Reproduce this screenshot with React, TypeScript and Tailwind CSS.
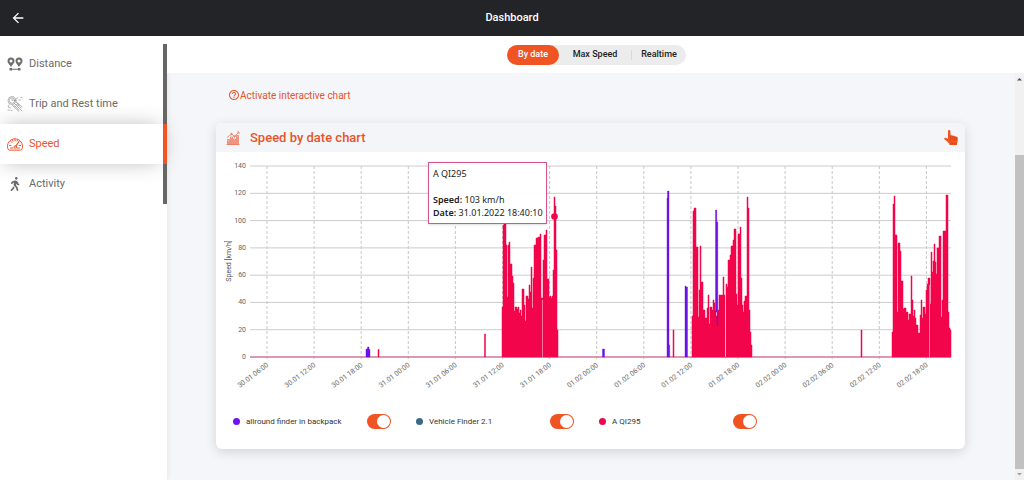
import React, { useState } from "react";
import { MdArrowBack, MdHelpOutline } from "react-icons/md";
import { FaWalking } from "react-icons/fa";

type IconProps = { className?: string };

function DistanceIcon({ className }: IconProps) {
  return (
    <svg viewBox="0 0 32 28" className={className} fill="currentColor" aria-hidden="true">
      <path
        fillRule="evenodd"
        d="M8 1a7 7 0 0 1 7 7c0 4-4 7-7 12C5 15 1 12 1 8a7 7 0 0 1 7-7Zm0 4a3 3 0 1 0 0 6 3 3 0 0 0 0-6ZM24 1a7 7 0 0 1 7 7c0 4-4 7-7 12-3-5-7-8-7-12a7 7 0 0 1 7-7Zm0 4a3 3 0 1 0 0 6 3 3 0 0 0 0-6Z"
      />
      <path d="M5 22h5v1.500h12V22h5v5h-5v-1.500H10V27H5z" />
    </svg>
  );
}

function TripIcon({ className }: IconProps) {
  return (
    <svg viewBox="0 0 32 32" className={className} fill="none" stroke="currentColor" strokeWidth="1" strokeLinecap="round" strokeLinejoin="round" aria-hidden="true">
      <circle cx="10" cy="9" r="8" />
      <circle cx="10" cy="9" r="5.500" />
      <path d="M10 6v3l3-1M18 6l4-3M18 12l6 6M15 15l15 15M11 19l13 12M20 13l10 9M4 18l-2 4 5 2M2 28h3M8 29h2M24 8h3M28 3h2M14 20c4 1 7 4 9 8M19 17c4 1 7 4 9 7" />
    </svg>
  );
}

function GaugeIcon({ className }: IconProps) {
  return (
    <svg viewBox="0 0 32 28" className={className} fill="none" stroke="currentColor" strokeWidth="2" strokeLinecap="round" strokeLinejoin="round" aria-hidden="true">
      <path d="M4 26a3 3 0 0 1-2-2 15 15 0 1 1 28 0 3 3 0 0 1-2 2Z" />
      <path d="M16 5v3M8 9l2 2M5 17h3M24 17h3M11 6l1 2M21 6l-1 2M7 22h5M20 22h5" />
      <path d="M24 9l-6 9" strokeWidth="2.500" />
      <circle cx="16.500" cy="20" r="2.500" />
    </svg>
  );
}

function WalkIcon({ className }: IconProps) {
  return <FaWalking className={className} />;
}

function BarsIcon({ className }: IconProps) {
  return (
    <svg viewBox="0 0 28 28" className={className} fill="none" stroke="currentColor" strokeWidth="1.200" strokeLinejoin="round" aria-hidden="true">
      <path d="M1 27h26M3 27V17h4v10M9 27V12h4v15M15 27V16h4v11M21 27V9h4v18M5 19v8M11 14v13M17 18v9M23 11v16" />
      <path d="M2 13l9-7 6 5 8-8M22 2h4v4" />
      <circle cx="11" cy="6" r="1.500" />
      <circle cx="17" cy="11" r="1.500" />
    </svg>
  );
}

function HandIcon({ className }: IconProps) {
  return (
    <svg viewBox="0 0 28 30" className={className} aria-hidden="true">
      <path
        fill="#f05423"
        d="M8 2.500C8 1 9 0 10.300 0S12.500 1 12.700 2.500L13.500 11c1-1 3.200-.8 4 .7 1.200-.9 3-.5 3.700.8 1.300-.6 3 0 3.500 1.200 1.400-.2 2.800.7 2.800 2.300v5c0 2-1 4-1.500 5.500V30H11v-2.500C8 25 5 21 1.500 19.500-.5 18 1 15 3.500 15.500L8 18Z"
      />
      <path d="M13.500 12v7M17.700 13v6M21.500 14v5M24.800 15v4" stroke="#b93a14" strokeWidth="0.900" strokeLinecap="round" />
      <path d="M11 27.500h15" stroke="#b93a14" strokeWidth="0.900" />
    </svg>
  );
}

const menu = [
  { label: "Distance", Icon: DistanceIcon },
  { label: "Trip and Rest time", Icon: TripIcon },
  { label: "Speed", Icon: GaugeIcon },
  { label: "Activity", Icon: WalkIcon },
];

function SideMenu() {
  return (
    <nav className="w-[167px] shrink-0 bg-white pt-2 shadow-[0_0_6px_rgba(0,0,0,0.08)]">
      <ul>
        {menu.map(({ label, Icon }) => {
          const active = label === "Speed";
          return (
            <li key={label} className={active ? "relative flex h-10" : "flex h-10"}>
              <a
                href="#"
                aria-current={active ? "page" : undefined}
                className={
                  active
                    ? "flex flex-1 items-center gap-1.5 bg-white pl-[7px] text-[#e8542a] shadow-[0_0_22px_-4px_rgba(0,0,0,0.35)]"
                    : "flex flex-1 items-center gap-1.5 pl-[7px] text-[#6c6c6c]"
                }
              >
                <Icon className={label === "Activity" ? "h-3.5 w-4" : "h-4 w-4 shrink-0"} />
                <span className="pt-px text-[11px]">{label}</span>
              </a>
              <span className={active ? "relative w-1 bg-[#f05423]" : "relative z-10 w-1 bg-[#666666]"} />
            </li>
          );
        })}
      </ul>
    </nav>
  );
}

function Tabs() {
  return (
    <div className="flex h-[37px] items-center justify-center bg-white pt-px pr-2.5 pl-3">
      <div role="tablist" className="flex h-5 items-center rounded-full bg-[#ececec] text-[9px] font-medium text-[#222222]">
        <button role="tab" aria-selected="true" className="h-5 w-[52px] rounded-full bg-[#f05423] text-white">By date</button>
        <button role="tab" aria-selected="false" className="h-5 w-[72px]">Max Speed</button>
        <span className="h-2.5 w-px bg-[#d8d8d8]" />
        <button role="tab" aria-selected="false" className="h-5 w-[54px]">Realtime</button>
      </div>
    </div>
  );
}

type Step = [number, number];
const BASE = 357;

// Each step is [x, top]; it holds until the next step's x.
const clusters: Step[][] = [
  [[502, 307], [503, 225], [504, 223], [506, 245], [507, 297], [508, 245], [509, 242], [510, 264], [512, 276], [513, 283], [514, 311], [515, 307], [517, 309], [518, 307], [519, 313], [520, 310], [521, 316], [522, 289], [524, 305], [525, 321], [526, 296], [528, 299], [529, 285], [530, 292], [531, 267], [532, 308], [533, 278], [534, 245], [536, 238], [538, 237], [540, 234], [541, 298], [543, 260], [544, 235], [546, 230], [547, 279], [549, 297], [550, 296], [551, 298], [552, 296], [553, 270], [554, 197], [555, 206], [556, 250], [557, 357]],
  [[692, 316], [693, 211], [694, 208], [696, 247], [698, 317], [699, 290], [700, 246], [701, 282], [703, 310], [705, 318], [707, 308], [708, 295], [709, 324], [710, 307], [712, 310], [713, 300], [714, 303], [715, 311], [716, 316], [718, 310], [719, 295], [723, 277], [724, 295], [725, 357], [726, 284], [727, 287], [728, 260], [730, 255], [731, 246], [733, 240], [734, 229], [736, 294], [737, 305], [738, 234], [740, 227], [741, 278], [742, 305], [743, 312], [744, 301], [745, 296], [747, 197], [748, 208], [749, 310], [750, 332], [751, 345], [752, 357]],
  [[892, 332], [893, 204], [894, 196], [895, 235], [897, 312], [898, 243], [900, 251], [901, 281], [903, 309], [904, 308], [906, 312], [908, 320], [909, 314], [911, 276], [912, 300], [913, 316], [914, 310], [915, 318], [916, 325], [918, 333], [920, 315], [921, 300], [922, 318], [923, 307], [925, 314], [926, 290], [927, 284], [928, 278], [930, 304], [931, 252], [932, 272], [933, 261], [934, 244], [935, 262], [936, 274], [937, 248], [939, 236], [941, 317], [942, 300], [943, 231], [946, 195], [948, 312], [949, 328], [950, 330], [951, 357]],
];

function stepPath(steps: Step[]) {
  let d = `M${steps[0][0]} ${BASE}`;
  steps.forEach(([x, y]) => {
    d += `H${x}V${y}`;
  });
  return `${d}V${BASE}Z`;
}

const ticks = ["30.01 06:00", "30.01 12:00", "30.01 18:00", "31.01 00:00", "31.01 06:00", "31.01 12:00", "31.01 18:00", "01.02 00:00", "01.02 06:00", "01.02 12:00", "01.02 18:00", "02.02 00:00", "02.02 06:00", "02.02 12:00", "02.02 18:00"];
const levels = [0, 20, 40, 60, 80, 100, 120, 140];

function SpeedChart() {
  return (
    <div className="relative">
      <svg viewBox="216 152 749 248" className="block h-auto w-full" role="img" aria-label="Speed by date">
        {levels.map((v) => {
          const y = BASE - v * 1.364;
          return (
            <g key={v}>
              <line x1="250" x2="951" y1={y} y2={y} stroke="#cccccc" strokeWidth="1" />
              <text x="246" y={y + 2} textAnchor="end" className="fill-[#666666] font-[Roboto] text-[7px]">{v}</text>
            </g>
          );
        })}
        {ticks.map((t, i) => {
          const x = 267 + i * 47.1;
          return (
            <g key={t}>
              <line x1={x} x2={x} y1="166" y2="360" stroke="#c8c8c8" strokeWidth="1" strokeDasharray="3 2" />
              <text x={x + 2} y="366" textAnchor="end" transform={`rotate(-37 ${x + 2} 366)`} className="fill-[#666666] font-[Roboto] text-[7px]">
                {t}
              </text>
            </g>
          );
        })}
        <text x="231" y="261" textAnchor="middle" transform="rotate(-90 231 261)" className="fill-[#555555] font-[Roboto] text-[7px]">Speed [km/h]</text>
        <line x1="250" x2="951" y1={BASE} y2={BASE} stroke="#d84a80" strokeWidth="1" />
        <g fill="#f2054b" stroke="#f2054b" strokeWidth="0.500" strokeLinejoin="round">
          {clusters.map((c, i) => (
            <path key={i} d={stepPath(c)} />
          ))}
          <path d="M378 357V350L379 349V357ZM484.500 357V334H485.500V357ZM557 357V330H558V357ZM673 357V330H674V357ZM861 357V330H862V357Z" />
        </g>
        <path d="M542.500 357V300M725.500 357V290M929.500 357V285" stroke="#ffc2d4" strokeWidth="0.600" />
        <g fill="#6a12e8" stroke="#6a12e8" strokeWidth="0.400">
          <path d="M366 357V349H367.500V347H369V349.500H370V357ZM602.500 357V349H604.500V357ZM667 357V198H667.500V191H669V345H669.700V357ZM685 357V286H686V287H687.500V357ZM715.500 312V210H716.800V222H717.800V326H717V312Z" />
        </g>
        <circle cx="554.500" cy="216.500" r="3.300" fill="#f2054b" />
      </svg>
      <div className="absolute top-[4%] left-[28.3%] border border-[#d9548a] bg-white/95 py-1 pr-[3px] pl-1 font-['Noto_Sans','Open_Sans',sans-serif] text-[9px] leading-[13px] whitespace-nowrap text-[#222222] shadow-sm">
        <p>A QI295</p>
        <p className="mt-[13px]"><b className="font-semibold">Speed:</b> 103 km/h</p>
        <p><b className="font-semibold">Date:</b> 31.01.2022 18:40:10</p>
      </div>
    </div>
  );
}

const series = [
  { name: "allround finder in backpack", dot: "h-[7px] w-[7px] rounded-full bg-[#7313f5]" },
  { name: "Vehicle Finder 2.1", dot: "h-[7px] w-[7px] rounded-full bg-[#3a6a88]" },
  { name: "A QI295", dot: "h-[7px] w-[7px] rounded-full bg-[#ec064e]" },
];

function Legend() {
  const [on, setOn] = useState([true, true, true]);
  return (
    <div className="grid grid-cols-4 pt-3.5 pb-5 pl-[17px]">
      {series.map((s, i) => (
        <label key={s.name} className="flex w-[158px] items-center text-[8px] text-[#333333]">
          <span className={s.dot} />
          <span className="ml-1.5 flex-1">{s.name}</span>
          <input
            type="checkbox"
            role="switch"
            checked={on[i]}
            onChange={() => setOn(on.map((v, k) => (k === i ? !v : v)))}
            className="flex h-[15px] w-6 appearance-none items-center rounded-full bg-[#bbbbbb] px-px before:h-[13px] before:w-[13px] before:rounded-full before:bg-white before:content-[''] checked:justify-end checked:bg-[#f05423]"
          />
        </label>
      ))}
    </div>
  );
}

function ScrollTrack() {
  return (
    <div aria-hidden="true" className="flex w-[9px] shrink-0 flex-col items-center bg-[#f1f1f1]">
      <svg viewBox="0 0 9 9" className="h-[9px] w-[9px] fill-[#505050]"><path d="M2 7.500 4.500 5 7 7.500Z" /></svg>
      <div className="mt-[73px] w-full flex-1 bg-[#c1c1c1]" />
      <svg viewBox="0 0 9 9" className="h-[11px] w-[9px] fill-[#a0a0a0]"><path d="M2 3 4.500 5.500 7 3Z" /></svg>
    </div>
  );
}

export default function App() {
  return (
    <div className="flex min-h-screen flex-col bg-[#f4f6f9] font-[Roboto,'Liberation_Sans',sans-serif]">
      <header className="grid h-9 grid-cols-[1fr_auto_1fr] items-center bg-[#222428] px-2.5 text-white">
        <button aria-label="Back" className="justify-self-start"><MdArrowBack className="h-4 w-4" /></button>
        <h1 className="pt-px text-[11px] font-medium">Dashboard</h1>
      </header>
      <div className="flex flex-1">
        <SideMenu />
        <div className="flex min-w-0 flex-1 flex-col">
          <Tabs />
          <div className="flex flex-1">
            <main className="min-w-0 flex-1 pr-[50px] pl-[49px]">
              <a href="#" className="mt-3.5 ml-3 flex h-4 items-center text-[10px] text-[#e8542a]">
                <MdHelpOutline className="h-3 w-3" />
                Activate interactive chart
              </a>
              <section className="mt-5 overflow-hidden rounded-md bg-white shadow-[0_3px_12px_rgba(0,0,0,0.14)]">
                <div className="flex h-[29px] items-center bg-[#f4f5f9] pr-[7px] pl-2.5 text-[#e8542a]">
                  <BarsIcon className="h-3.5 w-3.5" />
                  <h2 className="ml-2.5 flex-1 pt-px text-[13px] font-medium">Speed by date chart</h2>
                  <button aria-label="Interactive mode"><HandIcon className="h-[15px] w-3.5" /></button>
                </div>
                <SpeedChart />
                <Legend />
              </section>
            </main>
            <ScrollTrack />
          </div>
        </div>
      </div>
    </div>
  );
}
